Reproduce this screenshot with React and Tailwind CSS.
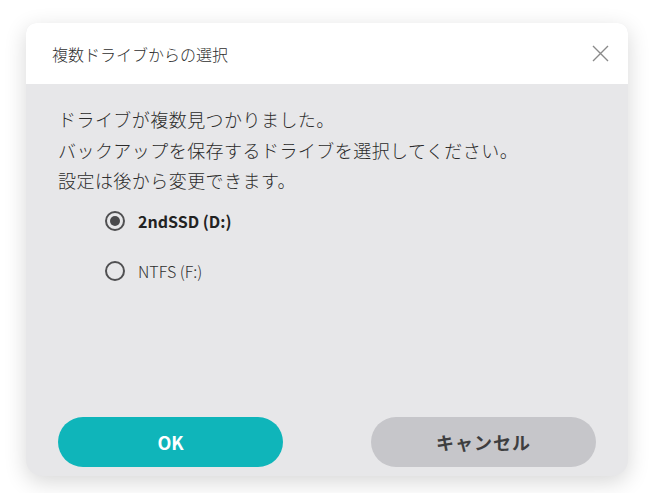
import React from "react";

function Radio({ checked }) {
  return (
    <span className="flex h-[20px] w-[20px] items-center justify-center rounded-full border-[2.5px] border-[#505052]">
      {checked && <span className="h-[10px] w-[10px] rounded-full bg-[#4a4a4c]" />}
    </span>
  );
}

export default function App() {
  const font = { fontFamily: '"Noto Sans CJK JP", "Noto Sans", sans-serif' };
  return (
    <div className="h-[493px] w-[656px] bg-white pl-[26px] pt-[23px]" style={font}>
      <div className="flex h-[453px] w-[602px] flex-col overflow-hidden rounded-t-[10px] rounded-b-[16px] bg-[#e7e7e9] shadow-[0_6px_22px_rgba(0,0,0,0.16)]">
        <div className="flex h-[61px] shrink-0 items-center justify-between bg-white pl-[26px] pr-[20px]">
          <span className="text-[16px] font-light text-[#2e2e2e]">複数ドライブからの選択</span>
          <svg width="17" height="17" viewBox="0 0 17 17" className="mr-[-1px]">
            <path d="M1 1 L16 16 M16 1 L1 16" stroke="#8a8a8a" strokeWidth="1.4" fill="none" />
          </svg>
        </div>
        <div className="flex flex-1 flex-col px-[32px] pb-[9px] pt-[20px]">
          <div className="text-[18px] font-light leading-[30.5px] tracking-[0.45px] text-[#2b2b2b]">
            <p>ドライブが複数見つかりました。</p>
            <p>バックアップを保存するドライブを選択してください。</p>
            <p>設定は後から変更できます。</p>
          </div>
          <div className="mt-[10px] flex flex-col gap-[20px] pl-[47px]">
            <label className="flex h-[30px] items-center gap-[13px]">
              <Radio checked />
              <span className="text-[16px] font-bold text-[#222]">2ndSSD (D:)</span>
            </label>
            <label className="flex h-[30px] items-center gap-[13px]">
              <Radio />
              <span className="text-[16px] font-light text-[#2f2f2f]">NTFS (F:)</span>
            </label>
          </div>
          <div className="mt-auto flex items-center justify-between">
            <button className="flex h-[50px] w-[225px] items-center justify-center rounded-full bg-[#0fb5ba] text-[18px] font-bold text-white">
              OK
            </button>
            <button className="flex h-[50px] w-[225px] items-center justify-center rounded-full bg-[#c6c6ca] text-[18px] font-bold tracking-[1px] text-[#3e3e40]">
              キャンセル
            </button>
          </div>
        </div>
      </div>
    </div>
  );
}
